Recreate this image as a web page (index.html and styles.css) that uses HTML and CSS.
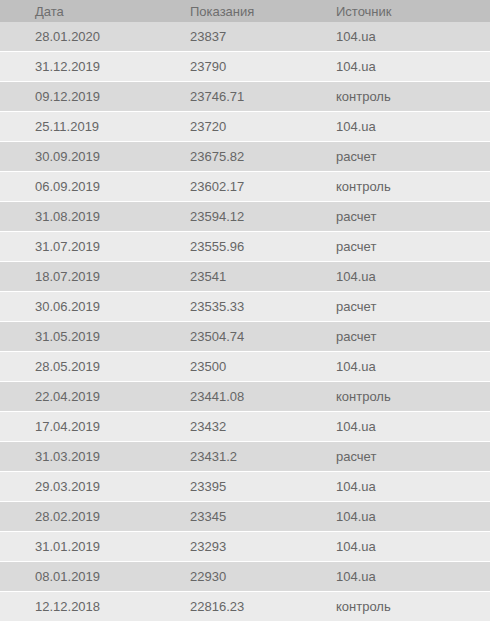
FILE: index.html
```html
<!DOCTYPE html>
<html>
<head>
<meta charset="utf-8">
<link rel="stylesheet" href="styles.css">
</head>
<body>
<table class="readings">
  <colgroup><col class="c1"><col class="c2"><col class="c3"></colgroup>
  <thead>
    <tr><th>Дата</th><th>Показания</th><th>Источник</th></tr>
  </thead>
  <tbody>
    <tr><td>28.01.2020</td><td>23837</td><td>104.ua</td></tr>
    <tr><td>31.12.2019</td><td>23790</td><td>104.ua</td></tr>
    <tr><td>09.12.2019</td><td>23746.71</td><td>контроль</td></tr>
    <tr><td>25.11.2019</td><td>23720</td><td>104.ua</td></tr>
    <tr><td>30.09.2019</td><td>23675.82</td><td>расчет</td></tr>
    <tr><td>06.09.2019</td><td>23602.17</td><td>контроль</td></tr>
    <tr><td>31.08.2019</td><td>23594.12</td><td>расчет</td></tr>
    <tr><td>31.07.2019</td><td>23555.96</td><td>расчет</td></tr>
    <tr><td>18.07.2019</td><td>23541</td><td>104.ua</td></tr>
    <tr><td>30.06.2019</td><td>23535.33</td><td>расчет</td></tr>
    <tr><td>31.05.2019</td><td>23504.74</td><td>расчет</td></tr>
    <tr><td>28.05.2019</td><td>23500</td><td>104.ua</td></tr>
    <tr><td>22.04.2019</td><td>23441.08</td><td>контроль</td></tr>
    <tr><td>17.04.2019</td><td>23432</td><td>104.ua</td></tr>
    <tr><td>31.03.2019</td><td>23431.2</td><td>расчет</td></tr>
    <tr><td>29.03.2019</td><td>23395</td><td>104.ua</td></tr>
    <tr><td>28.02.2019</td><td>23345</td><td>104.ua</td></tr>
    <tr><td>31.01.2019</td><td>23293</td><td>104.ua</td></tr>
    <tr><td>08.01.2019</td><td>22930</td><td>104.ua</td></tr>
    <tr><td>12.12.2018</td><td>22816.23</td><td>контроль</td></tr>
  </tbody>
</table>
</body>
</html>
```
FILE: styles.css
```css
html, body {
  margin: 0;
  padding: 0;
  background: #fff;
}
.readings {
  width: 490px;
  border-collapse: collapse;
  table-layout: fixed;
  font-family: "Liberation Sans", Arial, sans-serif;
  font-size: 13px;
  color: #666;
}
.c1 { width: 155px; }
.c2 { width: 146px; }
.readings th {
  height: 22px;
  padding: 0 0 0 35px;
  background: #c0c0c0;
  font-weight: normal;
  text-align: left;
  color: #6e6e6e;
  vertical-align: middle;
}
.readings td {
  height: 29px;
  padding: 0 0 0 35px;
  border-bottom: 1px solid #fff;
  vertical-align: middle;
}
.readings tbody tr:nth-child(odd) td { background: #dadada; }
.readings tbody tr:nth-child(even) td { background: #ebebeb; }
```
